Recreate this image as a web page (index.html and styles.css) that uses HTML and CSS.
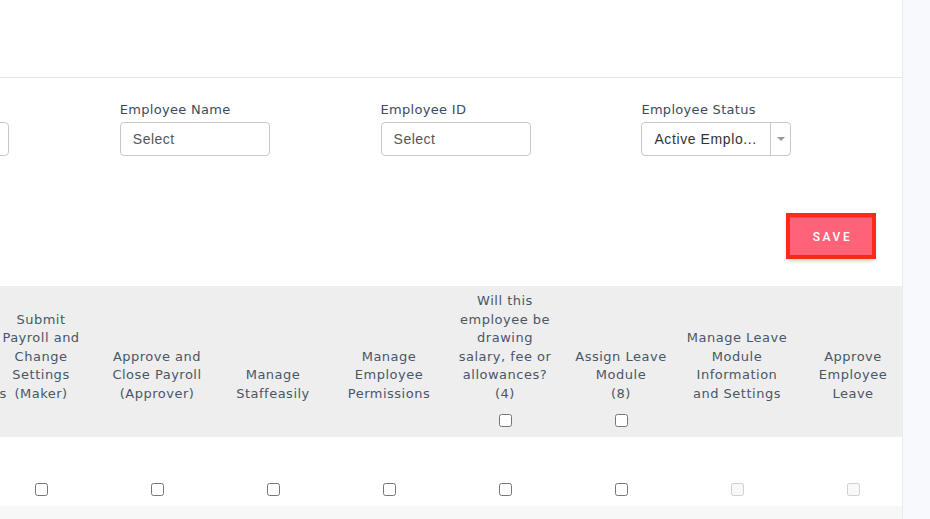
FILE: index.html
```html
<!DOCTYPE html>
<html lang="en">
<head>
<meta charset="utf-8">
<title>Employee Permissions</title>
<link rel="stylesheet" href="styles.css">
</head>
<body>
<div class="app">
  <main class="main">
    <div class="topbar"></div>
    <section class="filters">
      <div class="filter-row">
        <div class="field">
          <label class="field-label">Department</label>
          <div class="input">Select</div>
        </div>
        <div class="field">
          <label class="field-label">Employee Name</label>
          <div class="input">Select</div>
        </div>
        <div class="field">
          <label class="field-label">Employee ID</label>
          <div class="input">Select</div>
        </div>
        <div class="field">
          <label class="field-label">Employee Status</label>
          <div class="select">
            <span class="select-value">Active Emplo...</span>
            <span class="select-arrow"><span class="caret"></span></span>
          </div>
        </div>
      </div>
    </section>
    <div class="actions">
      <button class="save" type="button">SAVE</button>
    </div>
    <div class="table-wrap">
      <table class="perm">
        <thead>
          <tr>
            <th><span class="th-label">View Payroll Reports <span class="nowrap">Upload&nbsp;Documents</span></span><span class="th-check empty"><input type="checkbox"></span></th>
            <th><span class="th-label">Submit Payroll and Change Settings (Maker)</span><span class="th-check empty"><input type="checkbox"></span></th>
            <th><span class="th-label">Approve and Close Payroll (Approver)</span><span class="th-check empty"><input type="checkbox"></span></th>
            <th><span class="th-label">Manage Staffeasily</span><span class="th-check empty"><input type="checkbox"></span></th>
            <th><span class="th-label">Manage Employee Permissions</span><span class="th-check empty"><input type="checkbox"></span></th>
            <th><span class="th-label">Will this employee be drawing salary, fee or allowances?<br>(4)</span><span class="th-check"><input type="checkbox"></span></th>
            <th><span class="th-label">Assign Leave Module<br>(8)</span><span class="th-check"><input type="checkbox"></span></th>
            <th><span class="th-label"><span class="tight">Manage Leave</span> Module Information and Settings</span><span class="th-check empty"><input type="checkbox"></span></th>
            <th><span class="th-label">Approve Employee Leave</span><span class="th-check empty"><input type="checkbox"></span></th>
          </tr>
        </thead>
        <tbody>
          <tr class="row">
            <td><input type="checkbox"></td>
            <td><input type="checkbox"></td>
            <td><input type="checkbox"></td>
            <td><input type="checkbox"></td>
            <td><input type="checkbox"></td>
            <td><input type="checkbox"></td>
            <td><input type="checkbox"></td>
            <td><input type="checkbox" disabled></td>
            <td><input type="checkbox" disabled></td>
          </tr>
          <tr class="row alt">
            <td></td><td></td><td></td><td></td><td></td><td></td><td></td><td></td><td></td>
          </tr>
        </tbody>
      </table>
    </div>
  </main>
  <aside class="rail"></aside>
</div>
</body>
</html>
```

FILE: styles.css
```css
* { box-sizing: border-box; }

html, body {
  margin: 0;
  padding: 0;
  background: #ffffff;
}

body {
  font-family: "DejaVu Sans", "Liberation Sans", sans-serif;
  color: #3b4a5d;
  width: 930px;
  height: 519px;
  overflow: hidden;
}

.app {
  display: flex;
  height: 519px;
}

.main {
  flex: 1;
  min-width: 0;
  overflow: hidden;
  background: #ffffff;
}

.rail {
  width: 28px;
  flex: 0 0 28px;
  background: #f8f9fd;
  border-left: 1px solid #e9eaf0;
}

.topbar {
  height: 78px;
  border-bottom: 1px solid #e7e7e7;
}

.filters {
  padding-top: 24px;
}

.filter-row {
  display: flex;
  gap: 110.8px;
  margin-left: -141px;
}

.field {
  width: 150px;
  flex: 0 0 150px;
  display: flex;
  flex-direction: column;
  gap: 4px;
}

.field-label {
  font-size: 13px;
  line-height: 16px;
  letter-spacing: 0.3px;
  color: #3d4b5e;
  white-space: nowrap;
}

.input {
  height: 34px;
  border: 1px solid #c9c9c9;
  border-radius: 4px;
  padding: 0 12px;
  display: flex;
  align-items: center;
  font-family: "Liberation Sans", Arial, sans-serif;
  font-size: 14px;
  letter-spacing: 0.5px;
  color: #555555;
}

.select {
  height: 34px;
  border: 1px solid #c9c9c9;
  border-radius: 4px;
  display: flex;
  align-items: stretch;
}

.select-value {
  flex: 1;
  display: flex;
  align-items: center;
  padding-left: 12px;
  font-family: "Liberation Sans", Arial, sans-serif;
  font-size: 14px;
  letter-spacing: 0.6px;
  color: #333333;
  white-space: nowrap;
  overflow: hidden;
}

.select-arrow {
  width: 20px;
  border-left: 1px solid #c9c9c9;
  display: flex;
  align-items: center;
  justify-content: center;
}

.caret {
  width: 0;
  height: 0;
  border-left: 4px solid transparent;
  border-right: 4px solid transparent;
  border-top: 4px solid #9a9a9a;
}

.actions {
  display: flex;
  justify-content: flex-end;
  padding: 61px 30px 0 0;
}

.save {
  width: 82px;
  height: 38px;
  border: none;
  border-top: 1px solid #e2546a;
  background: #ff637a;
  outline: 4px solid #fb2a16;
  box-shadow: 0 3px 5px 2px rgba(0, 0, 0, 0.28);
  color: #ffffff;
  font-family: "Roboto", "Liberation Sans", sans-serif;
  font-size: 12px;
  font-weight: 500;
  letter-spacing: 2.6px;
  padding: 0 0 0 3px;
  cursor: pointer;
}

.table-wrap {
  margin-top: 31px;
  overflow: hidden;
}

.perm {
  margin-left: -133px;
  width: 1044px;
  table-layout: fixed;
  border-collapse: collapse;
  border-spacing: 0;
}

.perm th {
  width: 116px;
  background: #eeeeee;
  padding: 6px 8px 10px;
  vertical-align: bottom;
  text-align: center;
  font-weight: normal;
  font-size: 13px;
  line-height: 18.5px;
  letter-spacing: 0.5px;
  color: #4a5668;
}

.th-label {
  display: block;
}

.nowrap {
  white-space: nowrap;
}

.tight {
  display: inline-block;
  white-space: nowrap;
  margin: 0 -6px;
}

.th-check {
  display: block;
  height: 13px;
  margin-top: 11px;
  line-height: 0;
}

.th-check.empty {
  visibility: hidden;
}

.perm input[type="checkbox"] {
  margin: 0;
  width: 13px;
  height: 13px;
  vertical-align: top;
}

.row td {
  height: 69px;
  padding: 0 0 10px;
  vertical-align: bottom;
  text-align: center;
  background: #ffffff;
  line-height: 0;
}

.row.alt td {
  height: 40px;
  background: #f7f7f7;
}
```
